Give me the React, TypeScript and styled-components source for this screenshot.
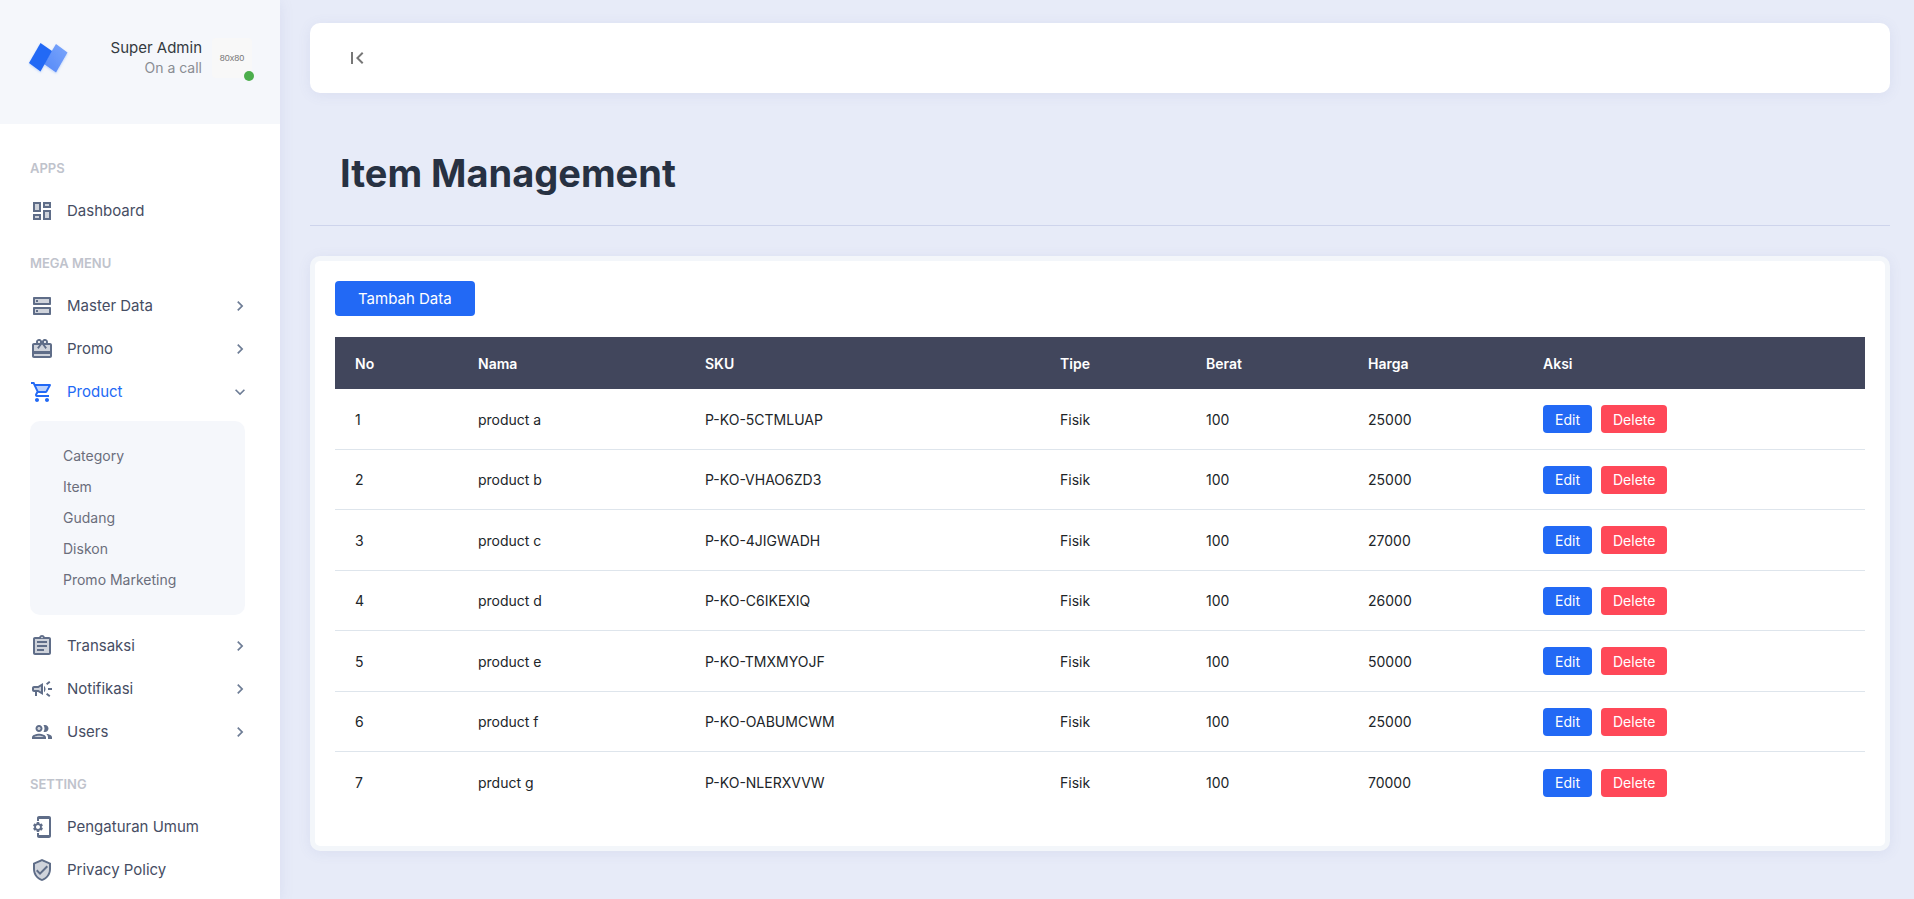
import React from "react";
import styled, { createGlobalStyle } from "styled-components";
import {
  MdChevronRight,
  MdExpandMore,
  MdFirstPage,
  MdOutlinePhonelinkSetup,
} from "react-icons/md";

const GlobalStyle = createGlobalStyle`
  *, *::before, *::after { box-sizing: border-box; }
  body {
    margin: 0;
    background: #e7ebf8;
    color: #212529;
    font-family: Inter, "Open Sans", sans-serif;
    font-size: 14px;
    line-height: 21px;
  }
  a { color: inherit; text-decoration: none; }
  button { font-family: inherit; cursor: pointer; }
`;

const Page = styled.div`
  display: flex;
  height: 100vh;
  overflow: hidden;
`;

/* Sidebar */

const Sidebar = styled.aside`
  flex: 0 0 280px;
  height: 100%;
  overflow: hidden;
  background: #fff;
  box-shadow: 0 2px 14px rgba(90, 100, 170, 0.1);
`;

const Profile = styled.header`
  display: flex;
  align-items: flex-start;
  height: 124px;
  padding: 38px 28px 0;
  background: #f5f7fb;
`;

const Logo = styled.svg`
  width: 42px;
  height: 40px;
`;

const Person = styled.div`
  margin-left: auto;
  line-height: 20px;
  text-align: right;
`;

const PersonName = styled.div`
  color: #343a40;
  font-size: 15px;
`;

const PersonStatus = styled.div`
  color: #8a8d93;
  font-size: 14px;
`;

const Avatar = styled.div`
  position: relative;
  display: grid;
  place-items: center;
  width: 40px;
  height: 40px;
  margin-left: 10px;
  border-radius: 4px;
  background: #f8f8f8;
  color: #777;
  font-family: "Liberation Sans", sans-serif;
  font-size: 9px;
  line-height: 12px;
`;

const Online = styled.span`
  position: absolute;
  right: -2px;
  bottom: -3px;
  width: 10px;
  height: 10px;
  border-radius: 50%;
  background: #4cae4c;
`;

const Nav = styled.nav`
  padding: 28px 30px 0;
`;

const Section = styled.section`
  margin-bottom: 15px;
`;

const SectionTitle = styled.h2`
  margin: 0;
  padding: 6px 0 10px;
  color: #bfc3cc;
  font-size: 13px;
  font-weight: 600;
  line-height: 21px;
`;

const List = styled.ul`
  margin: 0;
  padding: 0;
  list-style: none;
`;

const NavLink = styled.a<{ $active?: boolean }>`
  display: flex;
  align-items: center;
  height: 43px;
  color: ${(p) => (p.$active ? "#2269f5" : "#464d63")};
  font-size: 15px;

  > svg:first-child {
    flex: none;
    width: 24px;
    height: 24px;
    margin-right: 13px;
    color: ${(p) => (p.$active ? "#2269f5" : "#5f6d88")};
  }
`;

const Arrow = styled.span`
  display: flex;
  margin-left: auto;
  color: #6e7d96;
  font-size: 20px;
`;

const SubMenu = styled.ul`
  margin: 8px 5px 9px 0;
  padding: 19px 33px 20px;
  border-radius: 10px;
  background: #f5f7fb;
  color: #6b6e7b;
  font-size: 14px;
  line-height: 31px;
  list-style: none;
`;

/* Content */

const Content = styled.main`
  flex: 1;
  min-width: 0;
  padding: 23px 24px 0 30px;
`;

const TopBar = styled.header`
  display: flex;
  align-items: center;
  height: 70px;
  padding: 0 35px;
  border-radius: 10px;
  background: #fff;
  box-shadow: 0 2px 14px rgba(90, 100, 170, 0.09);
`;

const CollapseButton = styled.button`
  display: flex;
  padding: 0;
  border: 0;
  background: none;
  color: #777;
  font-size: 24px;
`;

const TitleBar = styled.div`
  margin-bottom: 30px;
  padding: 53px 30px 25px;
  border-bottom: 1px solid #ced4ec;
`;

const Title = styled.h1`
  margin: 0;
  color: #273142;
  font-size: 38px;
  font-weight: 700;
  line-height: 54px;
`;

const Card = styled.section`
  padding: 20px 20px 33px;
  border: 5px solid #f3f6fa;
  border-radius: 10px;
  background: #fff;
  box-shadow: 0 2px 14px rgba(90, 100, 170, 0.09);
`;

const AddButton = styled.button`
  height: 35px;
  margin-bottom: 21px;
  padding: 0 23px;
  border: 0;
  border-radius: 4px;
  background: #2269f5;
  color: #fff;
  font-size: 15px;
`;

const Table = styled.table`
  width: 100%;
  table-layout: fixed;
  border-spacing: 0;

  th, td {
    padding: 0 20px;
    text-align: left;
  }
  th {
    height: 52px;
    background: #41465c;
    color: #fff;
    font-weight: 600;
  }
  td {
    height: 61px;
    border-bottom: 1px solid #dee5ec;
  }
  tr:nth-child(even) td { height: 60px; }
  tr:last-child td { border-bottom: 0; }
`;

const Actions = styled.div`
  display: flex;
  gap: 9px;
`;

const ActionButton = styled.button<{ $danger?: boolean }>`
  height: 28px;
  padding: 0 12px;
  border: 0;
  border-radius: 4px;
  background: ${(p) => (p.$danger ? "#ff4858" : "#2269f5")};
  color: #fff;
  font-size: 14px;
`;

/* Two-tone icons: a faint fill below the outline */

const TwoTone = ({ fill, line }: { fill: string; line: string }) => (
  <svg viewBox="0 0 24 24" fill="currentColor" aria-hidden="true">
    <path d={fill} opacity="0.3" />
    <path d={line} fillRule="evenodd" />
  </svg>
);

const icons = {
  dashboard: {
    fill: "M5 5h4v6H5zm10 8h4v6h-4zM5 17h4v2H5zM15 5h4v2h-4z",
    line: "M3 13h8V3H3v10zm2-8h4v6H5V5zm8 16h8V11h-8v10zm2-8h4v6h-4v-6zM13 3v6h8V3h-8zm6 4h-4V5h4v2zM3 21h8v-6H3v6zm2-4h4v2H5v-2z",
  },
  data: {
    fill: "M5 15h14v4H5zM5 5h14v4H5z",
    line: "M20 13H4c-.55 0-1 .45-1 1v6c0 .55.45 1 1 1h16c.55 0 1-.45 1-1v-6c0-.55-.45-1-1-1zm-1 6H5v-4h14v4zM20 3H4c-.55 0-1 .45-1 1v6c0 .55.45 1 1 1h16c.55 0 1-.45 1-1V4c0-.55-.45-1-1-1zm-1 6H5V5h14v4zM6 6h2v2H6zM6 16h2v2H6z",
  },
  promo: {
    fill: "M4 17h16v2H4zM4 14h16V8h-5.08L17 10.83 15.38 12 12 7.4 8.62 12 7 10.83 9.08 8H4z",
    line: "M20 6h-2.18c.11-.31.18-.65.18-1 0-1.66-1.34-3-3-3-1.05 0-1.96.54-2.5 1.35l-.5.67-.5-.68C10.96 2.54 10.05 2 9 2 7.34 2 6 3.34 6 5c0 .35.07.69.18 1H4c-1.11 0-1.99.89-1.99 2L2 19c0 1.11.89 2 2 2h16c1.11 0 2-.89 2-2V8c0-1.11-.89-2-2-2zm-5-2c.55 0 1 .45 1 1s-.45 1-1 1-1-.45-1-1 .45-1 1-1zM9 4c.55 0 1 .45 1 1s-.45 1-1 1-1-.45-1-1 .45-1 1-1zm11 15H4v-2h16v2zm0-5H4V8h5.08L7 10.83 8.62 12 11 8.76l1-1.36 1 1.36L15.38 12 17 10.83 14.92 8H20v6z",
  },
  cart: {
    fill: "M15.55 11l2.76-5H6.16l2.37 5z",
    line: "M15.55 13c.75 0 1.41-.41 1.75-1.03l3.58-6.49c.37-.66-.11-1.48-.87-1.48H5.21l-.94-2H1v2h2l3.6 7.59-1.35 2.44C4.52 15.37 5.48 17 7 17h12v-2H7l1.1-2h7.45zM6.16 6h12.15l-2.76 5H8.53L6.16 6zM7 18c-1.1 0-1.99.9-1.99 2S5.9 22 7 22s2-.9 2-2-.9-2-2-2zm10 0c-1.1 0-1.99.9-1.99 2s.89 2 1.99 2 2-.9 2-2-.9-2-2-2z",
  },
  orders: {
    fill: "M5 5h14v14H5z",
    line: "M7 15h7v2H7zm0-4h10v2H7zm0-4h10v2H7zM19 3h-4.18C14.4 1.84 13.3 1 12 1c-1.3 0-2.4.84-2.82 2H5c-1.1 0-2 .9-2 2v14c0 1.1.9 2 2 2h14c1.1 0 2-.9 2-2V5c0-1.1-.9-2-2-2zm-7-.25c.41 0 .75.34.75.75s-.34.75-.75.75-.75-.34-.75-.75.34-.75.75-.75zM19 19H5V5h14v14z",
  },
  notify: {
    fill: "M8.55 11H4v2h4.55L11 14.47V9.53z",
    line: "M18 11v2h4v-2h-4zM16 17.61c.96.71 2.21 1.65 3.2 2.39.4-.53.8-1.07 1.2-1.6-.99-.74-2.24-1.68-3.2-2.4-.4.54-.8 1.08-1.2 1.61zM20.4 5.6c-.4-.53-.8-1.07-1.2-1.6-.99.74-2.24 1.68-3.2 2.4.4.53.8 1.07 1.2 1.6.96-.72 2.21-1.65 3.2-2.4zM4 9c-1.1 0-2 .9-2 2v2c0 1.1.9 2 2 2h1v4h2v-4h1l5 3V6L8 9H4zm5.03 1.71L11 9.53v4.94l-1.97-1.18-.48-.29H4v-2h4.55l.48-.29zM15.5 12c0-1.33-.58-2.53-1.5-3.35v6.69c.92-.81 1.5-2.01 1.5-3.34z",
  },
  users: {
    fill: "M4.34 17h9.32c-.84-.58-2.87-1.25-4.66-1.25S5.18 16.42 4.34 17zM9 7a1.5 1.5 0 1 0 0 3 1.5 1.5 0 0 0 0-3z",
    line: "M9 13.75c-2.34 0-7 1.17-7 3.5V19h14v-1.75c0-2.33-4.66-3.5-7-3.5zM4.34 17c.84-.58 2.87-1.25 4.66-1.25s3.82.67 4.66 1.25H4.34zM9 12c1.93 0 3.5-1.57 3.5-3.5S10.93 5 9 5 5.5 6.57 5.5 8.5 7.07 12 9 12zm0-5c.83 0 1.5.67 1.5 1.5S9.83 10 9 10s-1.5-.67-1.5-1.5S8.17 7 9 7zm7.04 6.81c1.16.84 1.96 1.96 1.96 3.44V19h4v-1.75c0-2.02-3.5-3.17-5.96-3.44zM15 12c1.93 0 3.5-1.57 3.5-3.5S16.93 5 15 5c-.54 0-1.04.13-1.5.35.63.89 1 1.98 1 3.15s-.37 2.26-1 3.15c.46.22.96.35 1.5.35z",
  },
  shield: {
    fill: "M5 6.3V11c0 4.52 2.98 8.69 7 9.93 4.02-1.24 7-5.41 7-9.93V6.3l-7-3.11L5 6.3z",
    line: "M12 1L3 5v6c0 5.55 3.84 10.74 9 12 5.16-1.26 9-6.45 9-12V5l-9-4zm7 10c0 4.52-2.98 8.69-7 9.93-4.02-1.24-7-5.41-7-9.93V6.3l7-3.11 7 3.11V11zm-11.59.59L6 13l4 4 8-8-1.41-1.42L10 14.17z",
  },
};

type Item = {
  label: string;
  icon?: keyof typeof icons;
  expandable?: boolean;
  children?: string[];
};

const menu: { title: string; items: Item[] }[] = [
  { title: "APPS", items: [{ label: "Dashboard", icon: "dashboard" }] },
  {
    title: "MEGA MENU",
    items: [
      { label: "Master Data", icon: "data", expandable: true },
      { label: "Promo", icon: "promo", expandable: true },
      {
        label: "Product",
        icon: "cart",
        children: ["Category", "Item", "Gudang", "Diskon", "Promo Marketing"],
      },
      { label: "Transaksi", icon: "orders", expandable: true },
      { label: "Notifikasi", icon: "notify", expandable: true },
      { label: "Users", icon: "users", expandable: true },
    ],
  },
  {
    title: "SETTING",
    items: [
      { label: "Pengaturan Umum" },
      { label: "Privacy Policy", icon: "shield" },
    ],
  },
];

const columns = [
  { label: "No", width: 123 },
  { label: "Nama", width: 227 },
  { label: "SKU", width: 355 },
  { label: "Tipe", width: 146 },
  { label: "Berat", width: 162 },
  { label: "Harga", width: 175 },
  { label: "Aksi", width: 342 },
];

const products = [
  ["product a", "P-KO-5CTMLUAP", "Fisik", 100, 25000],
  ["product b", "P-KO-VHAO6ZD3", "Fisik", 100, 25000],
  ["product c", "P-KO-4JIGWADH", "Fisik", 100, 27000],
  ["product d", "P-KO-C6IKEXIQ", "Fisik", 100, 26000],
  ["product e", "P-KO-TMXMYOJF", "Fisik", 100, 50000],
  ["product f", "P-KO-OABUMCWM", "Fisik", 100, 25000],
  ["prduct g", "P-KO-NLERXVVW", "Fisik", 100, 70000],
];

const NavItem = ({ item }: { item: Item }) => (
  <li>
    <NavLink href="#" $active={!!item.children}>
      {item.icon ? <TwoTone {...icons[item.icon]} /> : <MdOutlinePhonelinkSetup />}
      {item.label}
      {(item.expandable || item.children) && (
        <Arrow>{item.children ? <MdExpandMore /> : <MdChevronRight />}</Arrow>
      )}
    </NavLink>
    {item.children && (
      <SubMenu>
        {item.children.map((c) => (
          <li key={c}>
            <a href="#">{c}</a>
          </li>
        ))}
      </SubMenu>
    )}
  </li>
);

export default function App() {
  return (
    <Page>
      <GlobalStyle />
      <Sidebar>
        <Profile>
          <Logo viewBox="0 0 42 40" aria-label="Logo">
            <defs>
              <linearGradient id="pane" x1="1" y1="0" x2="0" y2="1">
                <stop offset="0" stopColor="#7ba6fb" />
                <stop offset="1" stopColor="#5488f8" />
              </linearGradient>
              <filter id="glow" x="-20%" y="-20%" width="140%" height="150%">
                <feDropShadow dx="0" dy="1" stdDeviation="1" floodColor="#2269f5" floodOpacity="0.25" />
              </filter>
            </defs>
            <g filter="url(#glow)">
              <path d="M28 6 39.5 14.5 28 34.5 16 26z" fill="url(#pane)" />
              <path d="M12.5 5 24 13 12.5 33.5 1 25z" fill="#2269f5" />
            </g>
          </Logo>
          <Person>
            <PersonName>Super Admin</PersonName>
            <PersonStatus>On a call</PersonStatus>
          </Person>
          <Avatar>
            80x80
            <Online />
          </Avatar>
        </Profile>
        <Nav>
          {menu.map((s) => (
            <Section key={s.title}>
              <SectionTitle>{s.title}</SectionTitle>
              <List>
                {s.items.map((i) => (
                  <NavItem key={i.label} item={i} />
                ))}
              </List>
            </Section>
          ))}
        </Nav>
      </Sidebar>
      <Content>
        <TopBar>
          <CollapseButton aria-label="Collapse menu">
            <MdFirstPage />
          </CollapseButton>
        </TopBar>
        <TitleBar>
          <Title>Item Management</Title>
        </TitleBar>
        <Card>
          <AddButton>Tambah Data</AddButton>
          <Table>
            <colgroup>
              {columns.map((c) => (
                <col key={c.label} width={c.width} />
              ))}
            </colgroup>
            <thead>
              <tr>
                {columns.map((c) => (
                  <th key={c.label} scope="col">
                    {c.label}
                  </th>
                ))}
              </tr>
            </thead>
            <tbody>
              {products.map((row, i) => (
                <tr key={row[1]}>
                  <td>{i + 1}</td>
                  {row.map((cell, j) => (
                    <td key={j}>{cell}</td>
                  ))}
                  <td>
                    <Actions>
                      <ActionButton>Edit</ActionButton>
                      <ActionButton $danger>Delete</ActionButton>
                    </Actions>
                  </td>
                </tr>
              ))}
            </tbody>
          </Table>
        </Card>
      </Content>
    </Page>
  );
}
